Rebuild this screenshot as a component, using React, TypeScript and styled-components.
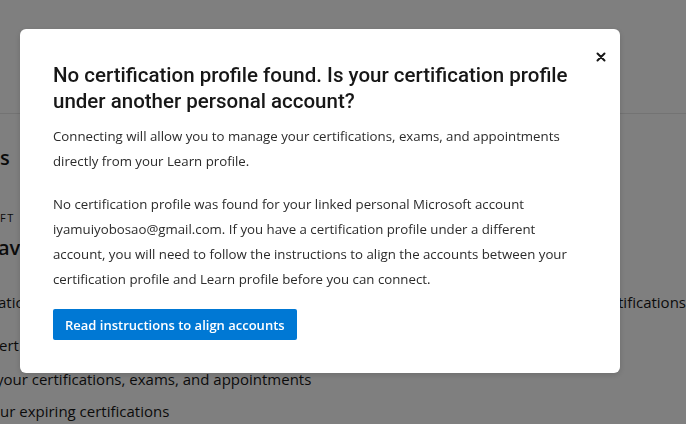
import React from "react";
import styled, { createGlobalStyle } from "styled-components";

const GlobalStyle = createGlobalStyle`
  html, body {
    margin: 0;
    padding: 0;
    background: #ffffff;
    font-family: "Open Sans", "Noto Sans", sans-serif;
    color: #171717;
    overflow: hidden;
  }
`;

const Page = styled.div`
  width: 686px;
  height: 424px;
  position: relative;
  overflow: hidden;
  background: #ffffff;
`;

const Header = styled.header`
  height: 113px;
  border-bottom: 1px solid #e6e6e6;
`;

const Content = styled.main`
  display: flex;
  flex-direction: column;
`;

const Heading = styled.div<{ $top: number; $indent?: number }>`
  margin-top: ${(p) => p.$top}px;
  margin-left: ${(p) => p.$indent ?? 0}px;
  font-size: 20px;
  font-weight: 600;
  line-height: 24px;
  white-space: nowrap;
`;

const Eyebrow = styled.div<{ $top: number }>`
  margin-top: ${(p) => p.$top}px;
  font-size: 11px;
  letter-spacing: 1.5px;
  line-height: 14px;
  text-transform: uppercase;
  white-space: nowrap;
`;

const Row = styled.div<{ $top: number }>`
  margin-top: ${(p) => p.$top}px;
  display: flex;
  justify-content: space-between;
  font-size: 15px;
  line-height: 20px;
  white-space: nowrap;
`;

const Cell = styled.span<{ $indent?: number }>`
  margin-left: ${(p) => p.$indent ?? 0}px;
`;

const Overlay = styled.div`
  position: fixed;
  inset: 0;
  background: rgba(0, 0, 0, 0.5);
`;

const Dialog = styled.div`
  position: fixed;
  top: 29px;
  left: 20px;
  width: 600px;
  box-sizing: border-box;
  padding: 33px 33px 33px;
  background: #ffffff;
  border-radius: 6px;
  box-shadow: 0 2px 6px rgba(0, 0, 0, 0.15);
`;

const CloseButton = styled.button`
  position: absolute;
  top: 20px;
  right: 11px;
  width: 16px;
  height: 16px;
  padding: 0;
  border: none;
  background: none;
  display: flex;
  align-items: center;
  justify-content: center;
  color: #171717;
  cursor: pointer;
`;

const Title = styled.h2`
  margin: 0;
  font-family: Roboto, "Open Sans", sans-serif;
  font-size: 20.5px;
  font-weight: 500;
  line-height: 26px;
  color: #171717;
`;

const Paragraph = styled.p<{ $top: number }>`
  margin: ${(p) => p.$top}px 0 0;
  font-size: 13.25px;
  line-height: 25px;
  color: #2b2b2b;
`;

const PrimaryButton = styled.button`
  margin-top: 17px;
  height: 31px;
  padding: 0 12px;
  border: none;
  border-radius: 2px;
  background: #0078d4;
  color: #ffffff;
  font-family: "Open Sans", "Noto Sans", sans-serif;
  font-size: 13px;
  font-weight: 600;
  cursor: pointer;
`;

const CloseIcon = () => (
  <svg width="10" height="10" viewBox="0 0 10 10">
    <path d="M1.5 1.5 L8.5 8.5 M8.5 1.5 L1.5 8.5" stroke="currentColor" strokeWidth="2" strokeLinecap="round" />
  </svg>
);

export default function App() {
  return (
    <Page>
      <GlobalStyle />
      <Header />
      <Content>
        <Heading $top={32}>s</Heading>
        <Eyebrow $top={41}>FT</Eyebrow>
        <Heading $top={11} $indent={-2}>av</Heading>
        <Row $top={32}>
          <Cell $indent={-2}>atic</Cell>
          <Cell>tifications</Cell>
        </Row>
        <Row $top={23}>
          <Cell $indent={-1}>ert</Cell>
        </Row>
        <Row $top={14}>
          <Cell $indent={-4}>your certifications, exams, and appointments</Cell>
        </Row>
        <Row $top={12}>
          <Cell $indent={0}>ur expiring certifications</Cell>
        </Row>
      </Content>
      <Overlay />
      <Dialog role="dialog">
        <CloseButton aria-label="Close">
          <CloseIcon />
        </CloseButton>
        <Title>No certification profile found. Is your certification profile under another personal account?</Title>
        <Paragraph $top={10}>
          Connecting will allow you to manage your certifications, exams, and appointments directly from your Learn
          profile.
        </Paragraph>
        <Paragraph $top={18}>
          No certification profile was found for your linked personal Microsoft account iyamuiyobosao@gmail.com. If you
          have a certification profile under a different account, you will need to follow the instructions to align the
          accounts between your certification profile and Learn profile before you can connect.
        </Paragraph>
        <PrimaryButton>Read instructions to align accounts</PrimaryButton>
      </Dialog>
    </Page>
  );
}
